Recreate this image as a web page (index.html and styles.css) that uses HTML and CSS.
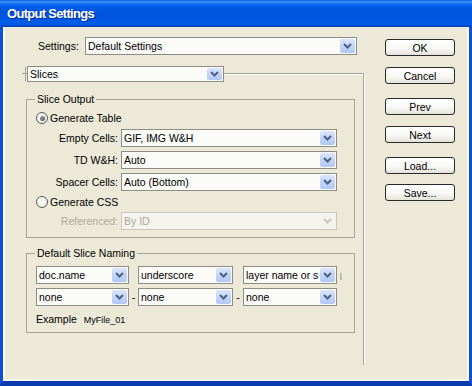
FILE: index.html
```html
<!DOCTYPE html>
<html>
<head>
<meta charset="utf-8">
<link rel="stylesheet" href="styles.css">
</head>
<body>
<div class="window">
  <div class="titlebar"><span class="title">Output Settings</span></div>
  <div class="frame">
    <div class="client">
      <div class="main">
        <div class="settings-row">
          <span class="settings-label">Settings:</span>
          <div class="select settings-select"><span class="val">Default Settings</span><span class="arrow"><svg width="9" height="6" viewBox="0 0 9 6"><polyline points="1,1 4.5,4.5 8,1" fill="none" stroke="#4d6185" stroke-width="2"/></svg></span></div>
        </div>
        <div class="slices">
          <div class="slices-head">
            <span class="tick"></span>
            <div class="select slices-select"><span class="val">Slices</span><span class="arrow"><svg width="9" height="6" viewBox="0 0 9 6"><polyline points="1,1 4.5,4.5 8,1" fill="none" stroke="#4d6185" stroke-width="2"/></svg></span></div>
            <span class="head-line"></span>
          </div>
          <div class="slices-body">
            <fieldset class="group">
              <legend>Slice Output</legend>
              <div class="gbody output-body">
                <div class="radio-row"><span class="radio on"></span><span>Generate Table</span></div>
                <div class="field-row"><span class="flabel">Empty Cells:</span><div class="select field-select"><span class="val">GIF, IMG W&amp;H</span><span class="arrow"><svg width="9" height="6" viewBox="0 0 9 6"><polyline points="1,1 4.5,4.5 8,1" fill="none" stroke="#4d6185" stroke-width="2"/></svg></span></div></div>
                <div class="field-row"><span class="flabel">TD W&amp;H:</span><div class="select field-select"><span class="val">Auto</span><span class="arrow"><svg width="9" height="6" viewBox="0 0 9 6"><polyline points="1,1 4.5,4.5 8,1" fill="none" stroke="#4d6185" stroke-width="2"/></svg></span></div></div>
                <div class="field-row"><span class="flabel">Spacer Cells:</span><div class="select field-select"><span class="val">Auto (Bottom)</span><span class="arrow"><svg width="9" height="6" viewBox="0 0 9 6"><polyline points="1,1 4.5,4.5 8,1" fill="none" stroke="#4d6185" stroke-width="2"/></svg></span></div></div>
                <div class="radio-row radio-css"><span class="radio"></span><span>Generate CSS</span></div>
                <div class="field-row refs disabled"><span class="flabel">Referenced:</span><div class="select field-select"><span class="val">By ID</span><span class="arrow"><svg width="9" height="6" viewBox="0 0 9 6"><polyline points="1,1 4.5,4.5 8,1" fill="none" stroke="#c9c7ba" stroke-width="2"/></svg></span></div></div>
              </div>
            </fieldset>
            <fieldset class="group naming">
              <legend>Default Slice Naming</legend>
              <div class="gbody naming-body">
                <div class="name-row first">
                  <div class="select ns1"><span class="val">doc.name</span><span class="arrow"><svg width="9" height="6" viewBox="0 0 9 6"><polyline points="1,1 4.5,4.5 8,1" fill="none" stroke="#4d6185" stroke-width="2"/></svg></span></div>
                  <span class="sep sep1"></span>
                  <div class="select ns2"><span class="val">underscore</span><span class="arrow"><svg width="9" height="6" viewBox="0 0 9 6"><polyline points="1,1 4.5,4.5 8,1" fill="none" stroke="#4d6185" stroke-width="2"/></svg></span></div>
                  <span class="sep sep2"></span>
                  <div class="select ns3"><span class="val">layer name or s</span><span class="arrow"><svg width="9" height="6" viewBox="0 0 9 6"><polyline points="1,1 4.5,4.5 8,1" fill="none" stroke="#4d6185" stroke-width="2"/></svg></span></div>
                  <span class="trail">|</span>
                </div>
                <div class="name-row">
                  <div class="select ns1"><span class="val">none</span><span class="arrow"><svg width="9" height="6" viewBox="0 0 9 6"><polyline points="1,1 4.5,4.5 8,1" fill="none" stroke="#4d6185" stroke-width="2"/></svg></span></div>
                  <span class="sep sep1">-</span>
                  <div class="select ns2"><span class="val">none</span><span class="arrow"><svg width="9" height="6" viewBox="0 0 9 6"><polyline points="1,1 4.5,4.5 8,1" fill="none" stroke="#4d6185" stroke-width="2"/></svg></span></div>
                  <span class="sep sep2">-</span>
                  <div class="select ns3"><span class="val">none</span><span class="arrow"><svg width="9" height="6" viewBox="0 0 9 6"><polyline points="1,1 4.5,4.5 8,1" fill="none" stroke="#4d6185" stroke-width="2"/></svg></span></div>
                </div>
                <div class="example-row"><span>Example</span><span class="example-val">MyFile_01</span></div>
              </div>
            </fieldset>
          </div>
        </div>
      </div>
      <div class="buttons">
        <div class="btn">OK</div>
        <div class="btn b-cancel">Cancel</div>
        <div class="btn b-prev">Prev</div>
        <div class="btn b-next">Next</div>
        <div class="btn b-load">Load...</div>
        <div class="btn b-save">Save...</div>
      </div>
    </div>
  </div>
</div>
</body>
</html>
```

FILE: styles.css
```css
* { box-sizing: border-box; }
html, body { margin: 0; padding: 0; }
body {
  width: 472px;
  height: 386px;
  overflow: hidden;
  background: #ffffff;
  font-family: "Liberation Sans", Arial, sans-serif;
  font-size: 10.5px;
  color: #000;
}
.window {
  width: 472px;
  height: 386px;
  display: flex;
  flex-direction: column;
}
.titlebar {
  height: 27px;
  flex: none;
  padding-left: 7px;
  background: linear-gradient(to bottom, #0050d8 0%, #3a8cf6 5%, #2a84f8 10%, #0a6af0 16%, #025ee6 24%, #0056e0 36%, #0054de 55%, #0057e4 72%, #005ce9 82%, #0058e0 90%, #004cc8 96%, #0044b8 100%);
}
.title {
  display: block;
  color: #fff;
  font-weight: bold;
  font-size: 13px;
  letter-spacing: -0.7px;
  line-height: 27px;
  text-shadow: 1px 1px 0 #0b2c8c;
}
.frame {
  flex: 1;
  display: flex;
  border-left: 3px solid #0b50d8;
  border-right: 3px solid #0b50d8;
  border-bottom: 5px solid #0a3cae;
}
.client {
  flex: 1;
  display: flex;
  align-items: flex-start;
  background: #ece9d8;
  padding: 10px 0 0 19px;
  box-shadow: inset 2px 0 0 #f8f7f0, inset -2px 0 0 #f8f7f0, inset 0 -2px 0 #f8f7f0;
}
.main {
  width: 342px;
  flex: none;
}
.settings-row {
  display: flex;
  align-items: center;
  height: 18px;
  padding-left: 16px;
}
.settings-label { width: 47px; }
.settings-select { width: 272px; height: 18px; }

.select {
  display: flex;
  align-items: stretch;
  border: 1px solid #8d8c86;
  background: #fbfbf8;
  padding: 1px 1px 1px 2px;
}
.select .val {
  flex: 1;
  min-width: 0;
  white-space: nowrap;
  overflow: hidden;
  display: flex;
  align-items: center;
}
.arrow {
  width: 15px;
  flex: none;
  border-radius: 2px;
  background: linear-gradient(to bottom, #dce6fc 0%, #c3d4f8 50%, #b2c7f4 100%);
  display: flex;
  align-items: center;
  justify-content: center;
}

.slices { margin-top: 11px; }
.slices-head {
  display: flex;
  height: 16px;
}
.tick {
  width: 5px;
  flex: none;
  background:
    linear-gradient(#a5a49b, #a5a49b) 0 7px / 5px 1px no-repeat,
    linear-gradient(#a5a49b, #a5a49b) 3px 1px / 1px 14px no-repeat;
}
.slices-select { width: 197px; height: 16px; flex: none; }
.head-line {
  flex: 1;
  height: 9px;
  align-self: flex-end;
  border-top: 1px solid #a5a49b;
  border-right: 1px solid #a5a49b;
  box-shadow: inset 0 1px 0 #fff, 1px 0 0 #fff;
}
.slices-body {
  border-right: 1px solid #a5a49b;
  box-shadow: 1px 0 0 #fff;
  padding: 11px 0 32px 4px;
}

fieldset.group {
  margin: 0;
  padding: 0;
  width: 329px;
  min-inline-size: 0;
  border: 1px solid #a5a49b;
}
fieldset.group legend {
  padding: 0 2px;
  margin-left: 8px;
  line-height: 13px;
  color: #000;
}
fieldset.naming { margin-top: 9px; }
.gbody { padding-left: 9px; }
.output-body { padding-top: 5px; padding-bottom: 7px; }
.naming-body { padding-top: 6px; padding-bottom: 6px; }

.radio-row {
  display: flex;
  align-items: center;
  height: 14px;
}
.radio-css { margin-top: 4px; }
.radio {
  width: 12px;
  height: 12px;
  margin-right: 2px;
  border: 1px solid #5a5a5a;
  border-radius: 50%;
  background: radial-gradient(circle at 40% 35%, #ffffff 0%, #f2f1ea 60%, #d8d6cc 100%);
  display: flex;
  align-items: center;
  justify-content: center;
}
.radio.on::after {
  content: "";
  width: 5px;
  height: 5px;
  border-radius: 50%;
  background: radial-gradient(circle at 35% 35%, #9a9a9a, #4a4a4a);
}
.field-row {
  display: flex;
  align-items: center;
  margin-top: 4px;
}
.field-row.refs { margin-top: 3px; }
.flabel {
  width: 82px;
  text-align: right;
  margin-right: 3px;
}
.field-select { width: 216px; height: 18px; }
.disabled .flabel,
.disabled .val { color: #aca899; }
.disabled .select { border-color: #c9c7ba; background: #f5f4ee; }
.disabled .arrow { background: #f3f2ec; }

.name-row {
  display: flex;
  align-items: center;
  margin-top: 4px;
}
.name-row.first { margin-top: 0; }
.name-row .select { height: 18px; flex: none; }
.ns1 { width: 93px; }
.ns2 { width: 95px; }
.ns3 { width: 94px; }
.sep { text-align: center; flex: none; }
.sep1 { width: 9px; }
.sep2 { width: 10px; }
.trail {
  margin-left: 3px;
  font-size: 7px;
  color: #555;
}
.example-row {
  display: flex;
  align-items: baseline;
  height: 13px;
  margin-top: 7px;
}
.example-val {
  margin-left: 7px;
  font-size: 9px;
}

.buttons {
  width: 70px;
  margin-left: 21px;
  padding-top: 2px;
  display: flex;
  flex-direction: column;
  flex: none;
}
.btn {
  height: 17px;
  border: 1px solid #2a2a2a;
  border-radius: 3px;
  background: linear-gradient(to bottom, #ffffff 0%, #f7f7f3 60%, #e4e2da 100%);
  display: flex;
  align-items: center;
  justify-content: center;
  color: #000;
}
.b-cancel { margin-top: 11px; }
.b-prev { margin-top: 14px; }
.b-next { margin-top: 11px; }
.b-load { margin-top: 14px; }
.b-save { margin-top: 10px; }
```
